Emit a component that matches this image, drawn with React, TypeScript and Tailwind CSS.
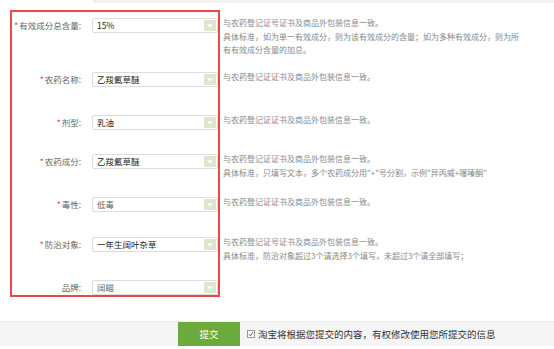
const rows = [
  {
    label: '有效成分总含量:',
    required: true,
    value: '15%',
    muted: false,
    h: 'h-[54px]',
    desc: [
      '与农药登记证号证书及商品外包装信息一致。',
      '具体标准，如为单一有效成分，则为该有效成分的含量；如为多种有效成分，则为所',
      '有有效成分含量的加总。',
    ],
  },
  { label: '农药名称:', required: true, value: '乙羧氟草醚', muted: false, h: 'h-[43px]', desc: ['与农药登记证证书及商品外包装信息一致。'] },
  { label: '剂型:', required: true, value: '乳油', muted: false, h: 'h-[39px]', desc: ['与农药登记证证书及商品外包装信息一致。'] },
  {
    label: '农药成分:',
    required: true,
    value: '乙羧氟草醚',
    muted: false,
    h: 'h-[43px]',
    desc: ['与农药登记证证书及商品外包装信息一致。', '具体标准，只填写文本，多个农药成分用"+"号分割，示例"异丙威+噻嗪酮"'],
  },
  { label: '毒性:', required: true, value: '低毒', muted: true, h: 'h-[40px]', desc: ['与农药登记证证书及商品外包装信息一致。'] },
  {
    label: '防治对象:',
    required: true,
    value: '一年生阔叶杂草',
    muted: false,
    h: 'h-[43px]',
    desc: ['与农药登记证号证书及商品外包装信息一致。', '具体标准，防治对象超过3个请选择3个填写，未超过3个请全部填写；'],
  },
  { label: '品牌:', required: false, value: '阔瞄', muted: true, h: 'h-[15px]', desc: [] },
];

function Select({ value, muted }: { value: string; muted: boolean }) {
  return (
    <div className="flex items-center w-[126px] h-[15px] border border-[#dcdcdc] rounded-[2px] bg-white pl-[4px] pr-[1px]">
      <span className={`flex-1 text-[8.5px] leading-none ${muted ? 'text-[#666]' : 'text-[#222]'}`}>{value}</span>
      <span className="flex items-center justify-center w-[12px] h-[11px] bg-[#dbe7cf]">
        <svg width="6" height="4" viewBox="0 0 6 4">
          <path d="M0 0.5h6L3 3.5z" fill="#fff" />
        </svg>
      </span>
    </div>
  );
}

export default function App() {
  return (
    <div className="w-[554px] h-[349px] bg-white overflow-hidden" style={{ fontFamily: '"Noto Sans CJK SC", "Noto Sans", sans-serif' }}>
      <div className="h-[3px] ml-[93px] bg-[#f2f2f2]" />

      <div className="flex mt-[7px]">
        <div className="ml-[10px] w-[210px] border-2 border-[#e8474c] pt-[6px]">
          {rows.map((r) => (
            <div key={r.label} className={`flex items-start ${r.h}`}>
              <div className="w-[69px] h-[15px] flex items-center justify-end text-[8.5px] text-[#666]">
                {r.required && <span className="text-[#e4393c] mr-[1px]">*</span>}
                {r.label}
              </div>
              <div className="ml-[11px]">
                <Select value={r.value} muted={r.muted} />
              </div>
            </div>
          ))}
        </div>

        <div className="pl-[3px] pt-[6px]">
          {rows.map((r) => (
            <div key={r.label} className={`${r.h} text-[8px] leading-[13.5px] text-[#888] whitespace-nowrap`}>
              {r.desc.map((d) => (
                <div key={d}>{d}</div>
              ))}
            </div>
          ))}
        </div>
      </div>

      <div className="mt-[24px] h-[25px] bg-[#f5f5f5] border-t border-[#ececec] flex">
        <button className="ml-[178px] w-[62px] h-full bg-[#6aab3d] text-white text-[9.5px]">提交</button>
        <label className="ml-[7px] flex items-center text-[9.5px] text-[#333]">
          <span className="w-[8px] h-[8px] border border-[#999] bg-white flex items-center justify-center mr-[3px]">
            <svg width="6" height="6" viewBox="0 0 6 6">
              <path d="M0.8 3.2L2.4 4.8L5.2 1" stroke="#2a5bb8" strokeWidth="1" fill="none" />
            </svg>
          </span>
          淘宝将根据您提交的内容，有权修改使用您所提交的信息
        </label>
      </div>
    </div>
  );
}
